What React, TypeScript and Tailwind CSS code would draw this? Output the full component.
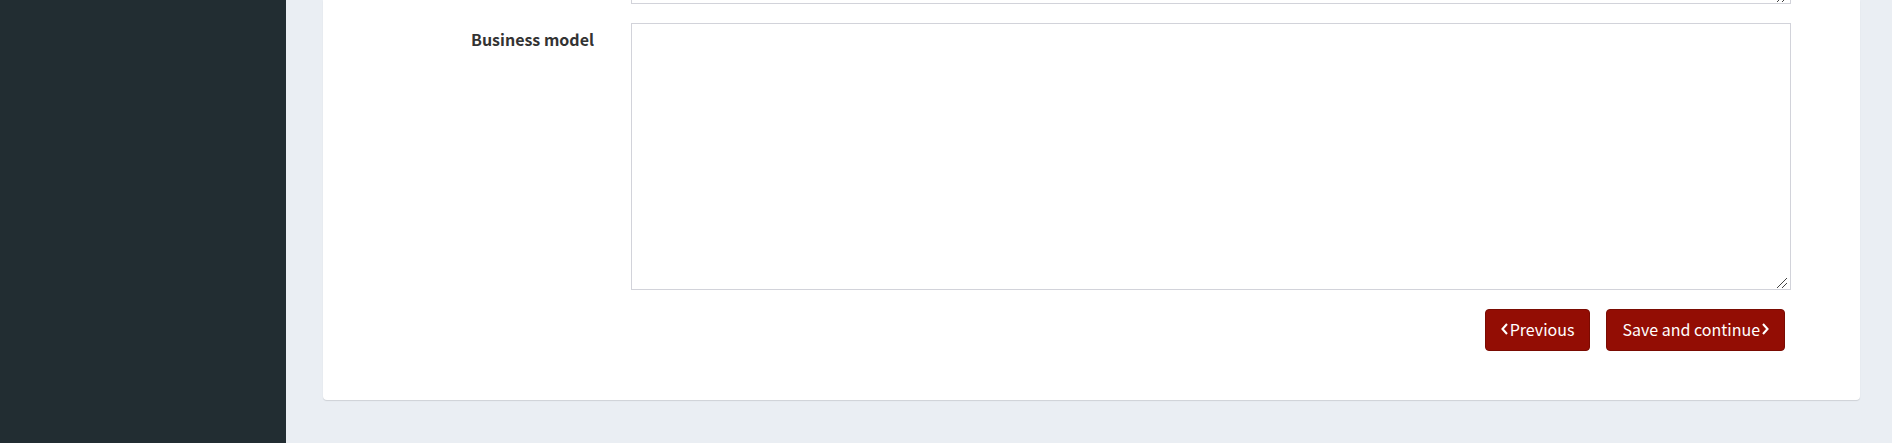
import type { ReactNode } from "react";

function Chevron({ points }: { points: string }) {
  return (
    <svg
      aria-hidden="true"
      viewBox="0 0 7 12"
      className="h-3 w-[7px] shrink-0"
      fill="none"
      stroke="currentColor"
      strokeWidth="2.1"
    >
      <polyline points={points} />
    </svg>
  );
}

function Grip() {
  return (
    <svg
      aria-hidden="true"
      viewBox="0 0 10 10"
      className="pointer-events-none absolute right-1 bottom-0.5 size-2.5"
      stroke="#444"
      strokeWidth="1"
    >
      <path d="M0 10 10 0M5 10 10 5" />
    </svg>
  );
}

function Area({ id, label }: { id: string; label?: string }) {
  return (
    <div className="relative">
      <textarea
        id={id}
        aria-label={label}
        className="block h-[267px] w-full resize-none border border-[#d2d3da] bg-white px-4 py-2 text-base text-[#555] outline-none"
      />
      <Grip />
    </div>
  );
}

function ActionButton({ children }: { children: ReactNode }) {
  return (
    <button
      type="button"
      className="flex h-[42px] items-center gap-0.5 rounded-[4px] border border-[#7a0b02] bg-[#930d04] px-[15px] pb-0.5 text-base text-white"
    >
      {children}
    </button>
  );
}

export default function App() {
  return (
    <div className="flex min-h-screen bg-[#eaeef3] font-['Noto_Sans_CJK_JP','Noto_Sans',sans-serif]">
      <aside className="w-[286px] shrink-0 bg-[#222d32]" />
      <main className="min-w-0 flex-1 pr-8 pb-[42px] pl-[37px]">
        <form className="rounded-b-[4px] bg-white pr-[69px] pb-[49px] shadow-[0_1px_1px_rgba(0,0,0,0.12)]">
          <div className="grid grid-cols-[271px_1fr] gap-x-[37px]">
            <div className="col-start-2 flex h-1 flex-col justify-end overflow-hidden">
              <Area id="previous-section" label="Previous section" />
            </div>
            <label
              htmlFor="business-model"
              className="mt-[19px] pt-1 text-right text-base leading-6 font-bold text-[#333]"
            >
              Business model
            </label>
            <div className="mt-[19px]">
              <Area id="business-model" />
            </div>
          </div>
          <div className="mt-[19px] flex justify-end gap-4 pr-1.5">
            <ActionButton>
              <Chevron points="6,1 1.5,6 6,11" />
              Previous
            </ActionButton>
            <ActionButton>
              Save and continue
              <Chevron points="1,1 5.5,6 1,11" />
            </ActionButton>
          </div>
        </form>
      </main>
    </div>
  );
}
